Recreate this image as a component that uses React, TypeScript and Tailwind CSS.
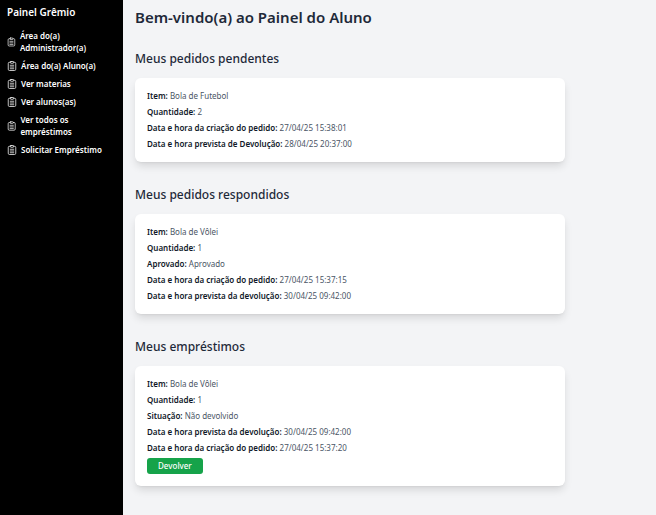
type Field = {
    label: string
    value: string
}

type Section = {
    title: string
    fields: Field[]
    canReturn?: boolean
}

const links = [
    "Área do(a) Administrador(a)",
    "Área do(a) Aluno(a)",
    "Ver materias",
    "Ver alunos(as)",
    "Ver todos os empréstimos",
    "Solicitar Empréstimo",
];

const sections: Section[] = [
    {
        title: "Meus pedidos pendentes",
        fields: [
            { label: "Item:", value: "Bola de Futebol" },
            { label: "Quantidade:", value: "2" },
            { label: "Data e hora da criação do pedido:", value: "27/04/25 15:38:01" },
            { label: "Data e hora prevista de Devolução:", value: "28/04/25 20:37:00" },
        ],
    },
    {
        title: "Meus pedidos respondidos",
        fields: [
            { label: "Item:", value: "Bola de Vôlei" },
            { label: "Quantidade:", value: "1" },
            { label: "Aprovado:", value: "Aprovado" },
            { label: "Data e hora da criação do pedido:", value: "27/04/25 15:37:15" },
            { label: "Data e hora prevista da devolução:", value: "30/04/25 09:42:00" },
        ],
    },
    {
        title: "Meus empréstimos",
        fields: [
            { label: "Item:", value: "Bola de Vôlei" },
            { label: "Quantidade:", value: "1" },
            { label: "Situação:", value: "Não devolvido" },
            { label: "Data e hora prevista da devolução:", value: "30/04/25 09:42:00" },
            { label: "Data e hora da criação do pedido:", value: "27/04/25 15:37:20" },
        ],
        canReturn: true,
    },
];

function ClipboardIcon() {
    return (
        <svg viewBox="0 0 20 20" className="w-[10px] h-[10px] min-w-2" fill="none" stroke="currentColor" strokeWidth="1.5" strokeLinecap="round">
            <path d="M6.5 2.5H5a2.5 2.5 0 0 0-2.5 2.5v11.5A2.5 2.5 0 0 0 5 19h10a2.5 2.5 0 0 0 2.5-2.5V5A2.5 2.5 0 0 0 15 2.5h-1.5" />
            <rect x="6.5" y="1" width="7" height="3.5" rx="1.5" />
            <path d="M6.5 8.5h7M6.5 12h7M6.5 15.5h7" />
        </svg>
    );
}

function Sidebar() {
    return (
        <aside className="w-[123px] shrink-0 bg-black text-white px-[7px] py-1">
            <h2 className="text-[10px] leading-4 font-semibold mb-[10px]">Painel Grêmio</h2>
            <nav className="flex flex-col gap-[6px]">
                {links.map((link) => (
                    <a key={link} href="#" className="flex items-center gap-1 text-[8px] leading-3 font-semibold">
                        <ClipboardIcon />
                        <span>{link}</span>
                    </a>
                ))}
            </nav>
        </aside>
    );
}

function Card({ section }: { section: Section }) {
    return (
        <section className="mt-6">
            <h2 className="text-[12px] leading-[18px] font-medium text-gray-800 mb-[10px]">{section.title}</h2>
            <div className="flex flex-col items-start gap-1 bg-white rounded-md shadow-[0_5px_8px_-1px_rgba(0,0,0,0.12),0_2px_3px_-2px_rgba(0,0,0,0.1)] p-3 text-[8px] leading-3">
                {section.fields.map((field) => (
                    <p key={field.label} className="text-gray-600">
                        <strong className="font-semibold text-gray-900">{field.label}</strong> {field.value}
                    </p>
                ))}
                {section.canReturn && (
                    <button className="h-4 px-[11px] rounded-[3px] bg-[#16a34a] text-white font-medium">Devolver</button>
                )}
            </div>
        </section>
    );
}

export default function App() {
    return (
        <div className="flex min-h-screen bg-gray-100 font-['Noto_Sans',sans-serif]">
            <Sidebar />
            <main className="grow px-3 pt-2 pb-6">
                <h1 className="text-[15px] leading-[18px] font-semibold text-gray-800">Bem-vindo(a) ao Painel do Aluno</h1>
                <div className="max-w-[430px]">
                    {sections.map((section) => (
                        <Card key={section.title} section={section} />
                    ))}
                </div>
            </main>
        </div>
    );
}
